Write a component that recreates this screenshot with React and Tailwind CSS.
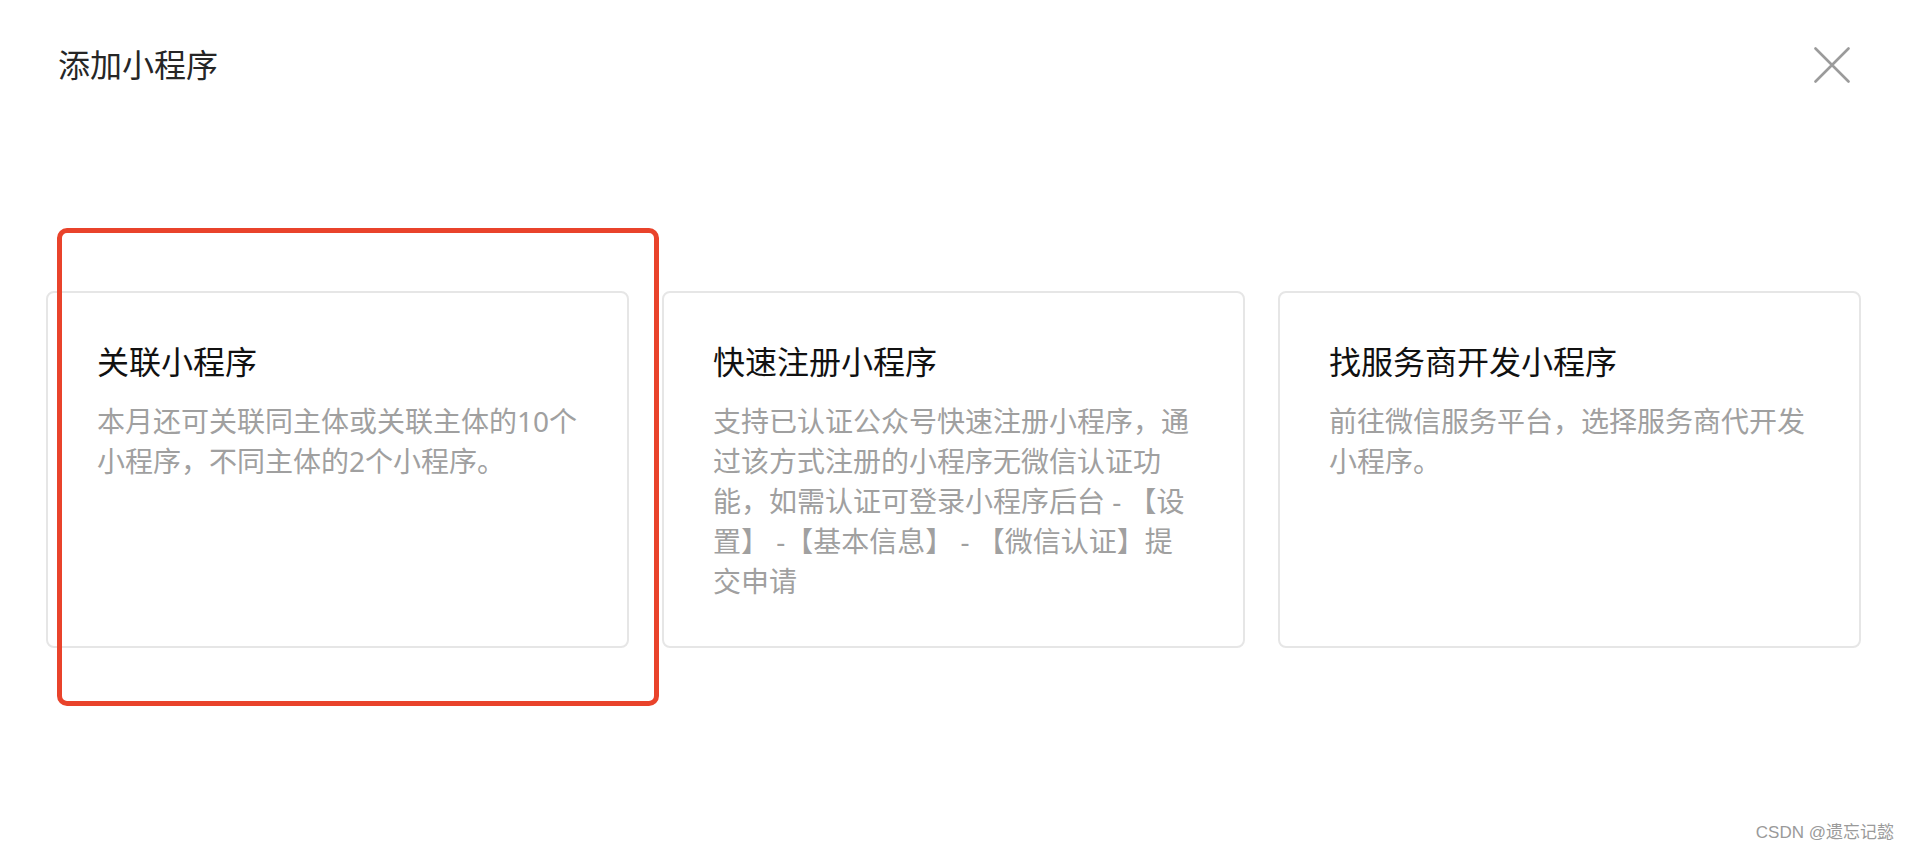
export default function App() {
  const font = { fontFamily: '"Noto Sans", "Noto Sans CJK SC", sans-serif' };
  const cards = [
    {
      title: "关联小程序",
      lines: ["本月还可关联同主体或关联主体的10个", "小程序，不同主体的2个小程序。"],
    },
    {
      title: "快速注册小程序",
      lines: [
        "支持已认证公众号快速注册小程序，通",
        "过该方式注册的小程序无微信认证功",
        "能，如需认证可登录小程序后台 - 【设",
        "置】 -【基本信息】 - 【微信认证】提",
        "交申请",
      ],
    },
    {
      title: "找服务商开发小程序",
      lines: ["前往微信服务平台，选择服务商代开发", "小程序。"],
    },
  ];
  return (
    <div
      className="relative w-[1910px] h-[852px] bg-white overflow-hidden"
      style={font}
    >
      <div className="flex items-center justify-between pl-[58px] pr-[60px] pt-[46px]">
        <div className="text-[32px] leading-[38px] text-[#262626]">添加小程序</div>
        <svg width="36" height="36" viewBox="0 0 36 36">
          <path
            d="M1.5 1.5 L34.5 34.5 M34.5 1.5 L1.5 34.5"
            stroke="#9b9b9b"
            strokeWidth="2.6"
            strokeLinecap="round"
          />
        </svg>
      </div>

      <div className="flex gap-[33px] pl-[46px] mt-[207px]">
        {cards.map((c) => (
          <div
            key={c.title}
            className="w-[583px] h-[357px] border-2 border-[#e6e6e6] rounded-[8px] px-[49px] pt-[47px]"
          >
            <div className="text-[32px] leading-[44px] text-[#111111] whitespace-nowrap">
              {c.title}
            </div>
            <div className="mt-[17px] text-[28px] leading-[40px] text-[#a0a0a0] whitespace-nowrap">
              {c.lines.map((l, i) => (
                <div key={i}>{l}</div>
              ))}
            </div>
          </div>
        ))}
      </div>

      <div className="absolute left-[57px] top-[228px] w-[602px] h-[478px] border-[5px] border-[#e9432b] rounded-[10px] pointer-events-none" />

      <div
        className="absolute right-[16px] bottom-[8px] text-[17px] leading-[22px] text-[#9a9a9a]"
        style={{ fontFamily: '"Liberation Sans", "Noto Sans CJK SC", sans-serif' }}
      >
        CSDN @遗忘记懿
      </div>
    </div>
  );
}
